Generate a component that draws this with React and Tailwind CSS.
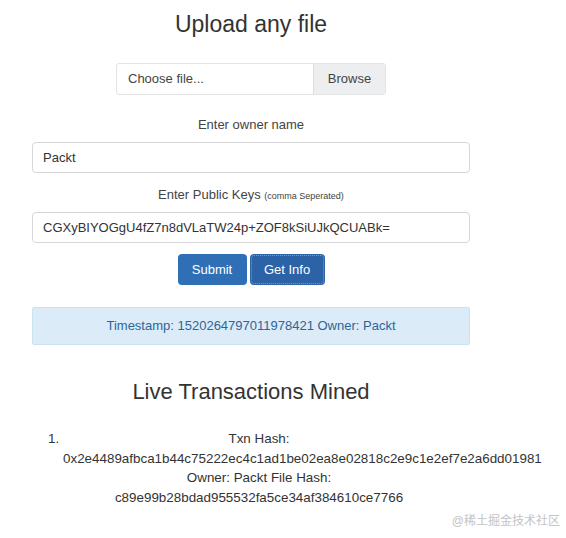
export default function App() {
  return (
    <div className="relative w-[566px] h-[538px] bg-white text-[#333] font-['Liberation_Sans',Arial,sans-serif] overflow-hidden">
      <div className="w-[502px] flex flex-col items-center">
        <h1 className="mt-[10px] text-[23px] leading-[28px] text-[#333]">Upload any file</h1>

        <div className="mt-[25px] w-[270px] h-[32px] flex border border-[#e3e3e3] rounded-[3px] text-[13px]">
          <div className="flex-1 flex items-center pl-[11px] text-[#444]">Choose file...</div>
          <div className="w-[72px] flex items-center justify-center bg-[#eceeef] border-l border-[#dcdcdc] text-[#444]">
            Browse
          </div>
        </div>

        <label className="mt-[22px] text-[13px] leading-[16px] text-[#444]">Enter owner name</label>
        <div className="mt-[9px] w-[438px] h-[31px] border border-[#d6d6d6] rounded-[4px] flex items-center pl-[10px] text-[13px] text-[#333]">
          Packt
        </div>

        <label className="mt-[14px] text-[13px] leading-[16px] text-[#444]">
          Enter Public Keys <span className="text-[9px]">(comma Seperated)</span>
        </label>
        <div className="mt-[8px] w-[438px] h-[31px] border border-[#d6d6d6] rounded-[4px] flex items-center pl-[10px] text-[13px] text-[#333]">
          CGXyBIYOGgU4fZ7n8dVLaTW24p+ZOF8kSiUJkQCUABk=
        </div>

        <div className="mt-[11px] flex gap-[3px]">
          <button className="w-[69px] h-[31px] rounded-[4px] bg-[#2f6fb6] text-white text-[13px]">Submit</button>
          <button className="w-[75px] h-[31px] rounded-[4px] bg-[#2c62a6] text-white text-[13px] outline-1 outline-dotted outline-[#7a9cc8] -outline-offset-2">
            Get Info
          </button>
        </div>

        <div className="mt-[22px] w-[438px] h-[38px] bg-[#dbecf8] border border-[#c9e3f3] rounded-[2px] flex items-center justify-center text-[13px] text-[#2f6596]">
          Timestamp: 1520264797011978421 Owner: Packt
        </div>

        <h2 className="mt-[34px] text-[22px] leading-[26px] text-[#333]">Live Transactions Mined</h2>
      </div>

      <ol className="mt-[24px] ml-[63px] w-[392px] list-decimal text-center text-[13.4px] leading-[19.7px] text-[#333]">
        <li className="pl-0">
          <div>Txn Hash:</div>
          <div>0x2e4489afbca1b44c75222ec4c1ad1be02ea8e02818c2e9c1e2ef7e2a6dd01981</div>
          <div>Owner: Packt File Hash:</div>
          <div>c89e99b28bdad955532fa5ce34af384610ce7766</div>
        </li>
      </ol>

      <div className="absolute right-[6px] bottom-[8px] text-[12px] text-[#c4c4c4] font-['Liberation_Sans','Noto_Sans_CJK_SC',sans-serif]">
        @稀土掘金技术社区
      </div>
    </div>
  );
}
